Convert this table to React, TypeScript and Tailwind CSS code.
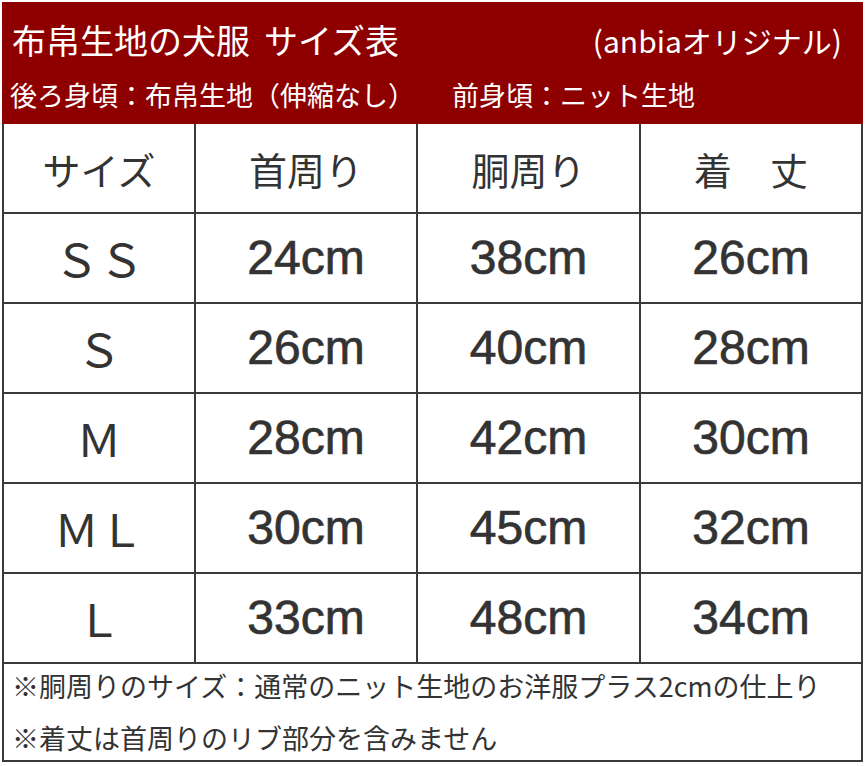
import React from "react";

const jp = "font-['Noto_Sans_CJK_JP',sans-serif]";
const num = "font-['Liberation_Sans','Noto_Sans_CJK_JP',sans-serif]";

const rows: [string, string, string, string][] = [
  ["ＳＳ", "24cm", "38cm", "26cm"],
  ["Ｓ", "26cm", "40cm", "28cm"],
  ["Ｍ", "28cm", "42cm", "30cm"],
  ["ＭＬ", "30cm", "45cm", "32cm"],
  ["Ｌ", "33cm", "48cm", "34cm"],
];

const cols = "grid grid-cols-[192px_222px_223px_222px]";
const cell = "flex items-center justify-center border-r-2 border-b-2 border-[#3a3a3a] h-[90px] text-[#333333]";
const numCell = `${cell} ${num} text-[48px] [-webkit-text-stroke:0.7px_#333333]`;

export default function App() {
  return (
    <div className={`w-[866px] h-[766px] bg-white pt-[2px] pl-[2px] ${jp}`}>
      <div className="w-[861px] h-[122px] bg-[#8e0000] text-white flex flex-col">
        <div className="flex items-center justify-between pl-[10px] pr-[21px] h-[70px] pt-[5px]">
          <span className="text-[34px] leading-none">
            布帛生地の犬服<span className="ml-[14px]">サイズ表</span>
          </span>
          <span className="text-[30px] leading-none">(anbiaオリジナル)</span>
        </div>
        <div className="flex items-center h-[50px] pl-[8px] pb-[6px] text-[27px] leading-none">
          <span>後ろ身頃：布帛生地（伸縮なし）</span>
          <span className="ml-[37px]">前身頃：ニット生地</span>
        </div>
      </div>
      <div className="w-[861px] border-l-2 border-[#3a3a3a]">
        <div className={cols}>
          <div className={`${cell} text-[38px]`}>サイズ</div>
          <div className={`${cell} text-[38px]`}>首周り</div>
          <div className={`${cell} text-[38px]`}>胴周り</div>
          <div className={`${cell} text-[38px]`}>着　丈</div>
        </div>
        {rows.map((r) => (
          <div key={r[0]} className={cols}>
            <div className={`${cell} text-[45px]`}>{r[0]}</div>
            <div className={numCell}>{r[1]}</div>
            <div className={numCell}>{r[2]}</div>
            <div className={numCell}>{r[3]}</div>
          </div>
        ))}
        <div className="h-[98px] border-r-2 border-b-2 border-[#3a3a3a] flex flex-col justify-center pl-[8px] text-[27px] text-[#333333] leading-[52px]">
          <div>※胴周りのサイズ：通常のニット生地のお洋服プラス2cmの仕上り</div>
          <div>※着丈は首周りのリブ部分を含みません</div>
        </div>
      </div>
    </div>
  );
}
